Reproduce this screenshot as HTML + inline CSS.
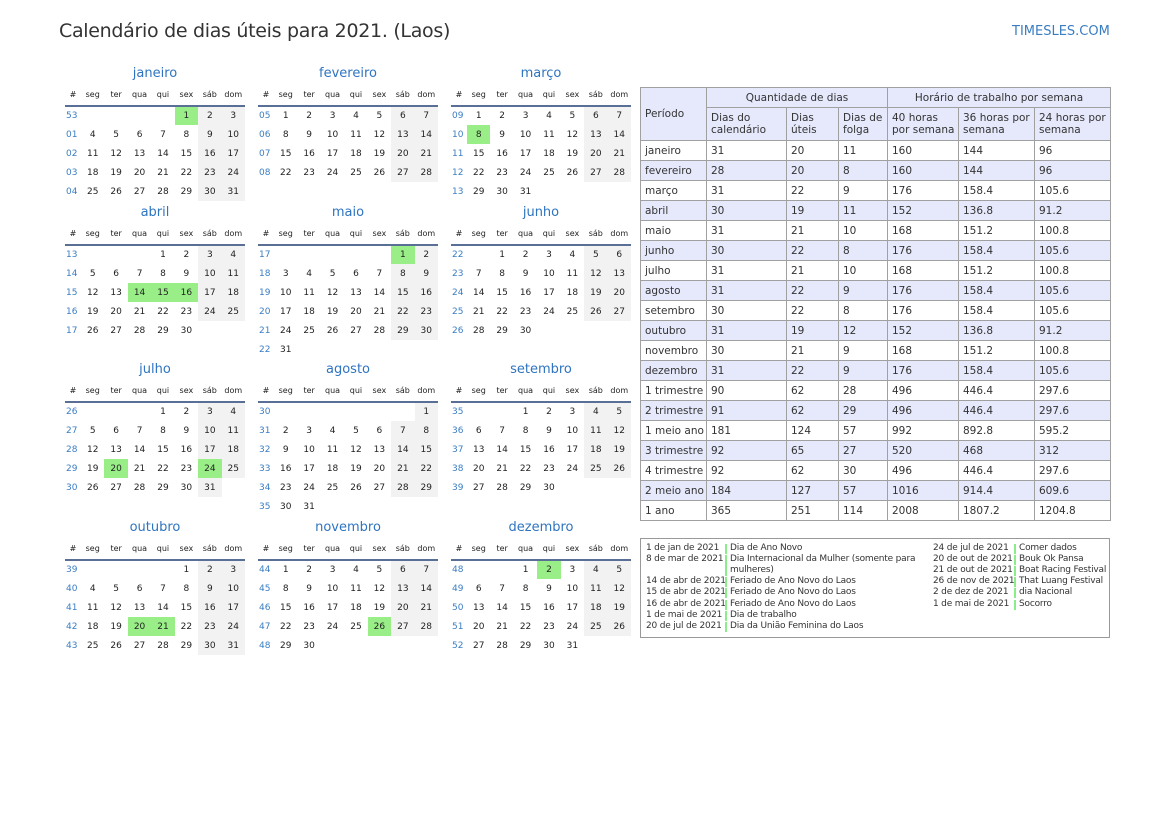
<!DOCTYPE html>
<html><head><meta charset="utf-8">
<style>
*{margin:0;padding:0;box-sizing:border-box}
body{width:1169px;height:827px;background:#fff;position:relative;font-family:"DejaVu Sans","Liberation Sans",sans-serif;color:#222;overflow:hidden}
.h1{position:absolute;left:59px;top:20px;font-size:19px;color:#333;letter-spacing:-0.3px}
.logo{position:absolute;left:1012px;top:24px;font-size:13px;color:#3a7dc3}
.m{position:absolute;width:180px}
.m .t{height:20px;line-height:20px;text-align:center;font-size:13px;color:#2e74c0}
.m table{border-collapse:collapse;table-layout:fixed;width:180px;font-size:9px}
.m th{height:22px;font-weight:normal;font-size:8px;border-bottom:2px solid #5a6f96;color:#222}
.m td{height:19px;text-align:center;padding:0}
.m td.w{color:#3a7dc3;text-align:left;padding-left:1px}
.m td.s{background:#f2f2f2}
.m td.g{background:#99ee88}
.tb{position:absolute;left:640px;top:87px;border-collapse:collapse;font-size:10.5px;font-family:"DejaVu Sans",sans-serif;color:#333;table-layout:fixed;width:470px}
.tb td{border:1px solid #a0a0a0;height:20px;padding:0 4px;vertical-align:middle;line-height:12px;white-space:nowrap;overflow:hidden}
.tb tr.h td{background:#e6e9fc}
.tb tr.a td{background:#e6e9fc}
.tb .c{text-align:center}
.lg{position:absolute;left:640px;top:538px;width:470px;height:100px;border:1px solid #999;font-size:9px;color:#333;font-family:"DejaVu Sans",sans-serif;letter-spacing:-0.2px}
.lg div{position:absolute;white-space:nowrap;line-height:11px}
.bar{position:absolute;width:2px;height:10px;background:#8e8}
</style></head><body>
<div class="h1">Calendário de dias úteis para 2021. (Laos)</div>
<div class="logo">TIMESLES.COM</div>

<div class="m" style="left:65px;top:64px"><div class="t">janeiro</div><table><colgroup><col style="width:16px"><col span="7"></colgroup>
<tr><th>#</th><th>seg</th><th>ter</th><th>qua</th><th>qui</th><th>sex</th><th>sáb</th><th>dom</th></tr>
<tr><td class="w">53</td><td></td><td></td><td></td><td></td><td class="g">1</td><td class="s">2</td><td class="s">3</td></tr>
<tr><td class="w">01</td><td>4</td><td>5</td><td>6</td><td>7</td><td>8</td><td class="s">9</td><td class="s">10</td></tr>
<tr><td class="w">02</td><td>11</td><td>12</td><td>13</td><td>14</td><td>15</td><td class="s">16</td><td class="s">17</td></tr>
<tr><td class="w">03</td><td>18</td><td>19</td><td>20</td><td>21</td><td>22</td><td class="s">23</td><td class="s">24</td></tr>
<tr><td class="w">04</td><td>25</td><td>26</td><td>27</td><td>28</td><td>29</td><td class="s">30</td><td class="s">31</td></tr>
</table></div>
<div class="m" style="left:258px;top:64px"><div class="t">fevereiro</div><table><colgroup><col style="width:16px"><col span="7"></colgroup>
<tr><th>#</th><th>seg</th><th>ter</th><th>qua</th><th>qui</th><th>sex</th><th>sáb</th><th>dom</th></tr>
<tr><td class="w">05</td><td>1</td><td>2</td><td>3</td><td>4</td><td>5</td><td class="s">6</td><td class="s">7</td></tr>
<tr><td class="w">06</td><td>8</td><td>9</td><td>10</td><td>11</td><td>12</td><td class="s">13</td><td class="s">14</td></tr>
<tr><td class="w">07</td><td>15</td><td>16</td><td>17</td><td>18</td><td>19</td><td class="s">20</td><td class="s">21</td></tr>
<tr><td class="w">08</td><td>22</td><td>23</td><td>24</td><td>25</td><td>26</td><td class="s">27</td><td class="s">28</td></tr>
</table></div>
<div class="m" style="left:451px;top:64px"><div class="t">março</div><table><colgroup><col style="width:16px"><col span="7"></colgroup>
<tr><th>#</th><th>seg</th><th>ter</th><th>qua</th><th>qui</th><th>sex</th><th>sáb</th><th>dom</th></tr>
<tr><td class="w">09</td><td>1</td><td>2</td><td>3</td><td>4</td><td>5</td><td class="s">6</td><td class="s">7</td></tr>
<tr><td class="w">10</td><td class="g">8</td><td>9</td><td>10</td><td>11</td><td>12</td><td class="s">13</td><td class="s">14</td></tr>
<tr><td class="w">11</td><td>15</td><td>16</td><td>17</td><td>18</td><td>19</td><td class="s">20</td><td class="s">21</td></tr>
<tr><td class="w">12</td><td>22</td><td>23</td><td>24</td><td>25</td><td>26</td><td class="s">27</td><td class="s">28</td></tr>
<tr><td class="w">13</td><td>29</td><td>30</td><td>31</td><td></td><td></td><td></td><td></td></tr>
</table></div>

<div class="m" style="left:65px;top:203px"><div class="t">abril</div><table><colgroup><col style="width:16px"><col span="7"></colgroup>
<tr><th>#</th><th>seg</th><th>ter</th><th>qua</th><th>qui</th><th>sex</th><th>sáb</th><th>dom</th></tr>
<tr><td class="w">13</td><td></td><td></td><td></td><td>1</td><td>2</td><td class="s">3</td><td class="s">4</td></tr>
<tr><td class="w">14</td><td>5</td><td>6</td><td>7</td><td>8</td><td>9</td><td class="s">10</td><td class="s">11</td></tr>
<tr><td class="w">15</td><td>12</td><td>13</td><td class="g">14</td><td class="g">15</td><td class="g">16</td><td class="s">17</td><td class="s">18</td></tr>
<tr><td class="w">16</td><td>19</td><td>20</td><td>21</td><td>22</td><td>23</td><td class="s">24</td><td class="s">25</td></tr>
<tr><td class="w">17</td><td>26</td><td>27</td><td>28</td><td>29</td><td>30</td><td></td><td></td></tr>
</table></div>
<div class="m" style="left:258px;top:203px"><div class="t">maio</div><table><colgroup><col style="width:16px"><col span="7"></colgroup>
<tr><th>#</th><th>seg</th><th>ter</th><th>qua</th><th>qui</th><th>sex</th><th>sáb</th><th>dom</th></tr>
<tr><td class="w">17</td><td></td><td></td><td></td><td></td><td></td><td class="g">1</td><td class="s">2</td></tr>
<tr><td class="w">18</td><td>3</td><td>4</td><td>5</td><td>6</td><td>7</td><td class="s">8</td><td class="s">9</td></tr>
<tr><td class="w">19</td><td>10</td><td>11</td><td>12</td><td>13</td><td>14</td><td class="s">15</td><td class="s">16</td></tr>
<tr><td class="w">20</td><td>17</td><td>18</td><td>19</td><td>20</td><td>21</td><td class="s">22</td><td class="s">23</td></tr>
<tr><td class="w">21</td><td>24</td><td>25</td><td>26</td><td>27</td><td>28</td><td class="s">29</td><td class="s">30</td></tr>
<tr><td class="w">22</td><td>31</td><td></td><td></td><td></td><td></td><td></td><td></td></tr>
</table></div>
<div class="m" style="left:451px;top:203px"><div class="t">junho</div><table><colgroup><col style="width:16px"><col span="7"></colgroup>
<tr><th>#</th><th>seg</th><th>ter</th><th>qua</th><th>qui</th><th>sex</th><th>sáb</th><th>dom</th></tr>
<tr><td class="w">22</td><td></td><td>1</td><td>2</td><td>3</td><td>4</td><td class="s">5</td><td class="s">6</td></tr>
<tr><td class="w">23</td><td>7</td><td>8</td><td>9</td><td>10</td><td>11</td><td class="s">12</td><td class="s">13</td></tr>
<tr><td class="w">24</td><td>14</td><td>15</td><td>16</td><td>17</td><td>18</td><td class="s">19</td><td class="s">20</td></tr>
<tr><td class="w">25</td><td>21</td><td>22</td><td>23</td><td>24</td><td>25</td><td class="s">26</td><td class="s">27</td></tr>
<tr><td class="w">26</td><td>28</td><td>29</td><td>30</td><td></td><td></td><td></td><td></td></tr>
</table></div>

<div class="m" style="left:65px;top:360px"><div class="t">julho</div><table><colgroup><col style="width:16px"><col span="7"></colgroup>
<tr><th>#</th><th>seg</th><th>ter</th><th>qua</th><th>qui</th><th>sex</th><th>sáb</th><th>dom</th></tr>
<tr><td class="w">26</td><td></td><td></td><td></td><td>1</td><td>2</td><td class="s">3</td><td class="s">4</td></tr>
<tr><td class="w">27</td><td>5</td><td>6</td><td>7</td><td>8</td><td>9</td><td class="s">10</td><td class="s">11</td></tr>
<tr><td class="w">28</td><td>12</td><td>13</td><td>14</td><td>15</td><td>16</td><td class="s">17</td><td class="s">18</td></tr>
<tr><td class="w">29</td><td>19</td><td class="g">20</td><td>21</td><td>22</td><td>23</td><td class="g">24</td><td class="s">25</td></tr>
<tr><td class="w">30</td><td>26</td><td>27</td><td>28</td><td>29</td><td>30</td><td class="s">31</td><td></td></tr>
</table></div>
<div class="m" style="left:258px;top:360px"><div class="t">agosto</div><table><colgroup><col style="width:16px"><col span="7"></colgroup>
<tr><th>#</th><th>seg</th><th>ter</th><th>qua</th><th>qui</th><th>sex</th><th>sáb</th><th>dom</th></tr>
<tr><td class="w">30</td><td></td><td></td><td></td><td></td><td></td><td></td><td class="s">1</td></tr>
<tr><td class="w">31</td><td>2</td><td>3</td><td>4</td><td>5</td><td>6</td><td class="s">7</td><td class="s">8</td></tr>
<tr><td class="w">32</td><td>9</td><td>10</td><td>11</td><td>12</td><td>13</td><td class="s">14</td><td class="s">15</td></tr>
<tr><td class="w">33</td><td>16</td><td>17</td><td>18</td><td>19</td><td>20</td><td class="s">21</td><td class="s">22</td></tr>
<tr><td class="w">34</td><td>23</td><td>24</td><td>25</td><td>26</td><td>27</td><td class="s">28</td><td class="s">29</td></tr>
<tr><td class="w">35</td><td>30</td><td>31</td><td></td><td></td><td></td><td></td><td></td></tr>
</table></div>
<div class="m" style="left:451px;top:360px"><div class="t">setembro</div><table><colgroup><col style="width:16px"><col span="7"></colgroup>
<tr><th>#</th><th>seg</th><th>ter</th><th>qua</th><th>qui</th><th>sex</th><th>sáb</th><th>dom</th></tr>
<tr><td class="w">35</td><td></td><td></td><td>1</td><td>2</td><td>3</td><td class="s">4</td><td class="s">5</td></tr>
<tr><td class="w">36</td><td>6</td><td>7</td><td>8</td><td>9</td><td>10</td><td class="s">11</td><td class="s">12</td></tr>
<tr><td class="w">37</td><td>13</td><td>14</td><td>15</td><td>16</td><td>17</td><td class="s">18</td><td class="s">19</td></tr>
<tr><td class="w">38</td><td>20</td><td>21</td><td>22</td><td>23</td><td>24</td><td class="s">25</td><td class="s">26</td></tr>
<tr><td class="w">39</td><td>27</td><td>28</td><td>29</td><td>30</td><td></td><td></td><td></td></tr>
</table></div>

<div class="m" style="left:65px;top:518px"><div class="t">outubro</div><table><colgroup><col style="width:16px"><col span="7"></colgroup>
<tr><th>#</th><th>seg</th><th>ter</th><th>qua</th><th>qui</th><th>sex</th><th>sáb</th><th>dom</th></tr>
<tr><td class="w">39</td><td></td><td></td><td></td><td></td><td>1</td><td class="s">2</td><td class="s">3</td></tr>
<tr><td class="w">40</td><td>4</td><td>5</td><td>6</td><td>7</td><td>8</td><td class="s">9</td><td class="s">10</td></tr>
<tr><td class="w">41</td><td>11</td><td>12</td><td>13</td><td>14</td><td>15</td><td class="s">16</td><td class="s">17</td></tr>
<tr><td class="w">42</td><td>18</td><td>19</td><td class="g">20</td><td class="g">21</td><td>22</td><td class="s">23</td><td class="s">24</td></tr>
<tr><td class="w">43</td><td>25</td><td>26</td><td>27</td><td>28</td><td>29</td><td class="s">30</td><td class="s">31</td></tr>
</table></div>
<div class="m" style="left:258px;top:518px"><div class="t">novembro</div><table><colgroup><col style="width:16px"><col span="7"></colgroup>
<tr><th>#</th><th>seg</th><th>ter</th><th>qua</th><th>qui</th><th>sex</th><th>sáb</th><th>dom</th></tr>
<tr><td class="w">44</td><td>1</td><td>2</td><td>3</td><td>4</td><td>5</td><td class="s">6</td><td class="s">7</td></tr>
<tr><td class="w">45</td><td>8</td><td>9</td><td>10</td><td>11</td><td>12</td><td class="s">13</td><td class="s">14</td></tr>
<tr><td class="w">46</td><td>15</td><td>16</td><td>17</td><td>18</td><td>19</td><td class="s">20</td><td class="s">21</td></tr>
<tr><td class="w">47</td><td>22</td><td>23</td><td>24</td><td>25</td><td class="g">26</td><td class="s">27</td><td class="s">28</td></tr>
<tr><td class="w">48</td><td>29</td><td>30</td><td></td><td></td><td></td><td></td><td></td></tr>
</table></div>
<div class="m" style="left:451px;top:518px"><div class="t">dezembro</div><table><colgroup><col style="width:16px"><col span="7"></colgroup>
<tr><th>#</th><th>seg</th><th>ter</th><th>qua</th><th>qui</th><th>sex</th><th>sáb</th><th>dom</th></tr>
<tr><td class="w">48</td><td></td><td></td><td>1</td><td class="g">2</td><td>3</td><td class="s">4</td><td class="s">5</td></tr>
<tr><td class="w">49</td><td>6</td><td>7</td><td>8</td><td>9</td><td>10</td><td class="s">11</td><td class="s">12</td></tr>
<tr><td class="w">50</td><td>13</td><td>14</td><td>15</td><td>16</td><td>17</td><td class="s">18</td><td class="s">19</td></tr>
<tr><td class="w">51</td><td>20</td><td>21</td><td>22</td><td>23</td><td>24</td><td class="s">25</td><td class="s">26</td></tr>
<tr><td class="w">52</td><td>27</td><td>28</td><td>29</td><td>30</td><td>31</td><td></td><td></td></tr>
</table></div>

<table class="tb">
<colgroup><col style="width:66px"><col style="width:80px"><col style="width:52px"><col style="width:49px"><col style="width:71px"><col style="width:76px"><col style="width:76px"></colgroup>
<tr class="h"><td rowspan="2">Período</td><td colspan="3" class="c">Quantidade de dias</td><td colspan="3" class="c">Horário de trabalho por semana</td></tr>
<tr class="h"><td style="height:33px">Dias do<br>calendário</td><td>Dias<br>úteis</td><td>Dias de<br>folga</td><td>40 horas<br>por semana</td><td>36 horas por<br>semana</td><td>24 horas por<br>semana</td></tr>
<tr><td>janeiro</td><td>31</td><td>20</td><td>11</td><td>160</td><td>144</td><td>96</td></tr>
<tr class="a"><td>fevereiro</td><td>28</td><td>20</td><td>8</td><td>160</td><td>144</td><td>96</td></tr>
<tr><td>março</td><td>31</td><td>22</td><td>9</td><td>176</td><td>158.4</td><td>105.6</td></tr>
<tr class="a"><td>abril</td><td>30</td><td>19</td><td>11</td><td>152</td><td>136.8</td><td>91.2</td></tr>
<tr><td>maio</td><td>31</td><td>21</td><td>10</td><td>168</td><td>151.2</td><td>100.8</td></tr>
<tr class="a"><td>junho</td><td>30</td><td>22</td><td>8</td><td>176</td><td>158.4</td><td>105.6</td></tr>
<tr><td>julho</td><td>31</td><td>21</td><td>10</td><td>168</td><td>151.2</td><td>100.8</td></tr>
<tr class="a"><td>agosto</td><td>31</td><td>22</td><td>9</td><td>176</td><td>158.4</td><td>105.6</td></tr>
<tr><td>setembro</td><td>30</td><td>22</td><td>8</td><td>176</td><td>158.4</td><td>105.6</td></tr>
<tr class="a"><td>outubro</td><td>31</td><td>19</td><td>12</td><td>152</td><td>136.8</td><td>91.2</td></tr>
<tr><td>novembro</td><td>30</td><td>21</td><td>9</td><td>168</td><td>151.2</td><td>100.8</td></tr>
<tr class="a"><td>dezembro</td><td>31</td><td>22</td><td>9</td><td>176</td><td>158.4</td><td>105.6</td></tr>
<tr><td>1 trimestre</td><td>90</td><td>62</td><td>28</td><td>496</td><td>446.4</td><td>297.6</td></tr>
<tr class="a"><td>2 trimestre</td><td>91</td><td>62</td><td>29</td><td>496</td><td>446.4</td><td>297.6</td></tr>
<tr><td>1 meio ano</td><td>181</td><td>124</td><td>57</td><td>992</td><td>892.8</td><td>595.2</td></tr>
<tr class="a"><td>3 trimestre</td><td>92</td><td>65</td><td>27</td><td>520</td><td>468</td><td>312</td></tr>
<tr><td>4 trimestre</td><td>92</td><td>62</td><td>30</td><td>496</td><td>446.4</td><td>297.6</td></tr>
<tr class="a"><td>2 meio ano</td><td>184</td><td>127</td><td>57</td><td>1016</td><td>914.4</td><td>609.6</td></tr>
<tr><td>1 ano</td><td>365</td><td>251</td><td>114</td><td>2008</td><td>1807.2</td><td>1204.8</td></tr>
</table>

<div class="lg">
<div style="left:5px;top:4px">1 de jan de 2021</div><span class="bar" style="left:84px;top:5px"></span><div style="left:89px;top:4px">Dia de Ano Novo</div>
<div style="left:5px;top:15px">8 de mar de 2021</div><span class="bar" style="left:84px;top:16px;height:21px"></span><div style="left:89px;top:15px">Dia Internacional da Mulher (somente para</div><div style="left:89px;top:26px">mulheres)</div>
<div style="left:5px;top:37px">14 de abr de 2021</div><span class="bar" style="left:84px;top:38px"></span><div style="left:89px;top:37px">Feriado de Ano Novo do Laos</div>
<div style="left:5px;top:48px">15 de abr de 2021</div><span class="bar" style="left:84px;top:49px"></span><div style="left:89px;top:48px">Feriado de Ano Novo do Laos</div>
<div style="left:5px;top:60px">16 de abr de 2021</div><span class="bar" style="left:84px;top:61px"></span><div style="left:89px;top:60px">Feriado de Ano Novo do Laos</div>
<div style="left:5px;top:71px">1 de mai de 2021</div><span class="bar" style="left:84px;top:72px"></span><div style="left:89px;top:71px">Dia de trabalho</div>
<div style="left:5px;top:82px">20 de jul de 2021</div><span class="bar" style="left:84px;top:83px"></span><div style="left:89px;top:82px">Dia da União Feminina do Laos</div>
<div style="left:292px;top:4px">24 de jul de 2021</div><span class="bar" style="left:373px;top:5px"></span><div style="left:378px;top:4px">Comer dados</div>
<div style="left:292px;top:15px">20 de out de 2021</div><span class="bar" style="left:373px;top:16px"></span><div style="left:378px;top:15px">Bouk Ok Pansa</div>
<div style="left:292px;top:26px">21 de out de 2021</div><span class="bar" style="left:373px;top:27px"></span><div style="left:378px;top:26px">Boat Racing Festival</div>
<div style="left:292px;top:37px">26 de nov de 2021</div><span class="bar" style="left:373px;top:38px"></span><div style="left:378px;top:37px">That Luang Festival</div>
<div style="left:292px;top:48px">2 de dez de 2021</div><span class="bar" style="left:373px;top:49px"></span><div style="left:378px;top:48px">dia Nacional</div>
<div style="left:292px;top:60px">1 de mai de 2021</div><span class="bar" style="left:373px;top:61px"></span><div style="left:378px;top:60px">Socorro</div>
</div>
</body></html>
